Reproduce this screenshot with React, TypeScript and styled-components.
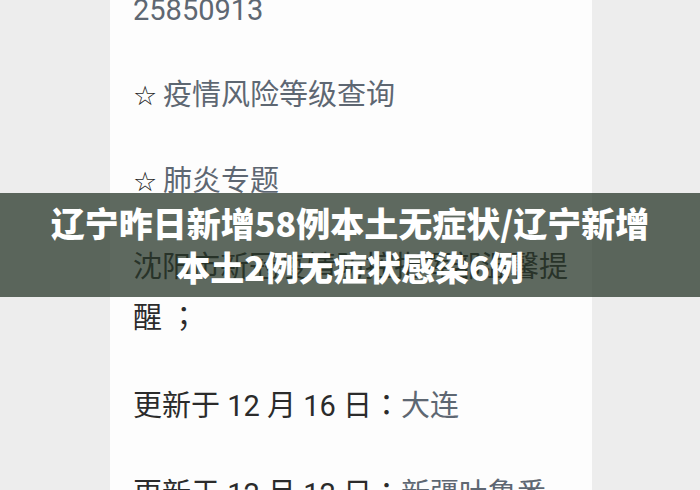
import React from 'react';
import styled, { createGlobalStyle } from 'styled-components';

const GlobalStyle = createGlobalStyle`
  html, body {
    margin: 0;
    padding: 0;
    background: #ededed;
  }
`;

const Screen = styled.div`
  position: relative;
  display: flex;
  width: 700px;
  height: 490px;
  overflow: hidden;
  background: #ededed;
`;

const Side = styled.div<{ $width?: number }>`
  flex: ${({ $width }) => ($width ? `0 0 ${$width}px` : '1 1 auto')};
  background: #ededed;
`;

const Sheet = styled.div`
  flex: 0 0 482px;
  box-sizing: border-box;
  padding: 0 20px 0 23px;
  background: #fdfdfd;
  overflow: hidden;
`;

// the page is scrolled a little, so the first line is cut off at the top
const Feed = styled.div`
  display: flex;
  flex-direction: column;
  gap: 37px;
  margin-top: -14px;
`;

const Para = styled.p<{ $link?: boolean }>`
  margin: 0;
  font-family: Roboto, 'Noto Sans CJK SC', sans-serif;
  font-size: 29px;
  line-height: 48px;
  color: ${({ $link }) => ($link ? '#5e6772' : '#2b2b2b')};
  white-space: nowrap;
`;

const Link = styled.span`
  color: #5e6772;
`;

// full-width punctuation sits centred in its box on the phone
const Punct = styled.span`
  font-family: 'Noto Sans CJK TC', sans-serif;
`;

const Star = styled.span`
  display: inline-block;
  width: 30px;
  font-family: 'DejaVu Sans', sans-serif;
  font-size: 27px;
  color: #1f1f1f;
`;

const Banner = styled.div`
  position: absolute;
  top: 193px;
  left: 0;
  right: 0;
  height: 104px;
  box-sizing: border-box;
  padding-top: 8px;
  background: rgba(40, 55, 42, 0.75);
`;

const Title = styled.div`
  font-family: 'Noto Sans CJK SC', 'Noto Sans', sans-serif;
  font-weight: 900;
  font-size: 34px;
  line-height: 44px;
  color: #ffffff;
  text-align: center;
  white-space: nowrap;
`;

export default function App() {
  return (
    <>
      <GlobalStyle />
      <Screen>
        <Side $width={110} />
        <Sheet>
          <Feed>
            <Para $link>25850913</Para>
            <Para>
              <Star>☆</Star>
              <Link>疫情风险等级查询</Link>
            </Para>
            <Para>
              <Star>☆</Star>
              <Link>肺炎专题</Link>
            </Para>
            <Para>
              沈阳市新冠疫情防控指挥部温馨提
              <br />
              醒 <Punct>；</Punct>
            </Para>
            <Para>
              更新于 12 月 16 日<Punct>：</Punct>
              <Link>大连</Link>
            </Para>
            <Para>
              更新于 12 月 12 日<Punct>：</Punct>
              <Link>新疆吐鲁番</Link>
            </Para>
          </Feed>
        </Sheet>
        <Side />
        <Banner>
          <Title>辽宁昨日新增58例本土无症状/辽宁新增</Title>
          <Title>本土2例无症状感染6例</Title>
        </Banner>
      </Screen>
    </>
  );
}
